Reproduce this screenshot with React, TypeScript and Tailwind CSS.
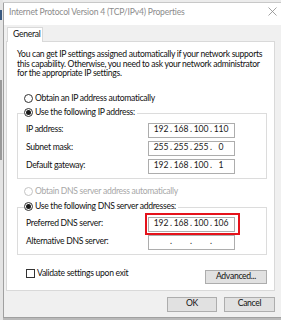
import React from 'react'

const Radio: React.FC<{ checked?: boolean; disabled?: boolean }> = ({ checked, disabled }) => (
  <span
    className={`flex h-[9px] w-[9px] shrink-0 items-center justify-center rounded-full border bg-white ${disabled ? 'border-[#c4c4c4]' : 'border-[#333]'}`}
  >
    {checked && <span className="h-[5px] w-[5px] rounded-full bg-[#1a1a1a]" />}
  </span>
)

const IpBox: React.FC<{ parts: string[] }> = ({ parts }) => (
  <div className="flex h-[15px] w-[87px] items-center border border-[#adadad] bg-white pl-[4px] tracking-[-0.2px] text-[#1a1a1a]">
    {parts.map((p, i) => (
      <React.Fragment key={i}>
        {i > 0 && <span className="w-[4px] text-center">.</span>}
        <span className="w-[16px] text-center">{p}</span>
      </React.Fragment>
    ))}
  </div>
)

const Row: React.FC<{ label: string; children: React.ReactNode }> = ({ label, children }) => (
  <div className="flex h-[15px] items-center pl-[8px]">
    <span className="w-[122px] shrink-0">{label}</span>
    {children}
  </div>
)

const App: React.FC = () => {
  return (
    <div className="flex h-[320px] w-[281px] overflow-hidden bg-[#b9b9b9] font-['Lato',sans-serif] text-[8.6px] leading-[9.5px] tracking-[-0.3px] text-[#111]">
      <div className="flex w-[3px] shrink-0 flex-col bg-[#e4e4e4]">
        <div className="h-[10px]" />
        <div className="h-[10px] w-[2px] bg-[#3a5a80]" />
        <div className="h-[60px]" />
        <div className="h-[80px] w-[2px] bg-[#9a9a9a]" />
      </div>
      <div className="flex flex-1 flex-col">
        <div className="h-[3px] shrink-0 border-b border-[#c8c8c8] bg-[#ececec]" />
        <div className="flex h-[315px] shrink-0 flex-col border-l border-b border-[#a0a0a0] bg-[#f0f0f0]">
          {/* title bar */}
          <div className="flex h-[22px] shrink-0 items-start justify-between bg-white pl-[5px] pr-[4px] pt-[3px]">
            <span className="leading-[12px] tracking-[-0.2px] text-[#8c8c8c]">Internet Protocol Version 4 (TCP/IPv4) Properties</span>
            <svg width="9" height="9" viewBox="0 0 9 9" className="mt-[1px]">
              <path d="M0.5 0.5 L8.5 8.5 M8.5 0.5 L0.5 8.5" stroke="#8a8a8a" strokeWidth="0.8" fill="none" />
            </svg>
          </div>

          <div className="flex flex-col pl-[2px] pt-[2px]">
            {/* tab */}
            <div className="relative z-10 ml-[1px] flex h-[15px] w-[36px] items-center border border-b-0 border-[#d9d9d9] bg-white pl-[5px]">
              General
            </div>
            {/* panel */}
            <div className="-mt-[1px] flex w-[269px] flex-col border border-[#d9d9d9] bg-white pb-[6px] pl-[10px] pr-[7px] pt-[8px]">
              <p className="whitespace-nowrap">
                You can get IP settings assigned automatically if your network supports
                <br />
                this capability. Otherwise, you need to ask your network administrator
                <br />
                for the appropriate IP settings.
              </p>

              <div className="ml-[7px] mt-[14px] flex h-[12px] items-center gap-[2px]">
                <Radio />
                <span>Obtain an IP address automatically</span>
              </div>

              <div className="mt-[8px] flex flex-col border border-[#dcdcdc] pb-[4px]">
                <div className="-mt-[7px] ml-[6px] flex h-[12px] w-fit items-center gap-[2px] bg-white pr-[2px]">
                  <Radio checked />
                  <span>Use the following IP address:</span>
                </div>
                <div className="mt-[4px] flex flex-col gap-[3px]">
                  <Row label="IP address:">
                    <IpBox parts={['192', '168', '100', '110']} />
                  </Row>
                  <Row label="Subnet mask:">
                    <IpBox parts={['255', '255', '255', '0']} />
                  </Row>
                  <Row label="Default gateway:">
                    <IpBox parts={['192', '168', '100', '1']} />
                  </Row>
                </div>
              </div>

              <div className="ml-[7px] mt-[7px] flex h-[12px] items-center gap-[2px] text-[#a8a8a8]">
                <Radio disabled />
                <span>Obtain DNS server address automatically</span>
              </div>

              <div className="mt-[9px] flex flex-col border border-[#dcdcdc] pb-[4px]">
                <div className="-mt-[7px] ml-[6px] flex h-[12px] w-fit items-center gap-[2px] bg-white pr-[2px]">
                  <Radio checked />
                  <span>Use the following DNS server addresses:</span>
                </div>
                <div className="mt-[4px] flex flex-col gap-[3px]">
                  <Row label="Preferred DNS server:">
                    <div className="relative">
                      <IpBox parts={['192', '168', '100', '106']} />
                      <span className="pointer-events-none absolute -bottom-[3px] -left-[3px] -right-[5px] -top-[4px] border-2 border-[#e5121b]" />
                    </div>
                  </Row>
                  <Row label="Alternative DNS server:">
                    <IpBox parts={['', '', '', '']} />
                  </Row>
                </div>
              </div>

              <div className="mt-[14px] flex items-start justify-between">
                <div className="ml-[9px] flex items-center gap-[2px]">
                  <span className="h-[9px] w-[9px] border border-[#333] bg-white" />
                  <span>Validate settings upon exit</span>
                </div>
                <button className="mt-[1px] flex h-[14px] w-[62px] items-center justify-center border border-[#adadad] bg-[#e1e1e1]">
                  Advanced...
                </button>
              </div>
            </div>

            {/* dialog buttons */}
            <div className="mt-[6px] flex w-[269px] justify-end gap-[7px]">
              <button className="flex h-[15px] w-[50px] items-center justify-center border border-[#adadad] bg-[#e1e1e1]">OK</button>
              <button className="flex h-[15px] w-[51px] items-center justify-center border border-[#adadad] bg-[#e1e1e1]">Cancel</button>
            </div>
          </div>
        </div>
      </div>
    </div>
  )
}

export default App
